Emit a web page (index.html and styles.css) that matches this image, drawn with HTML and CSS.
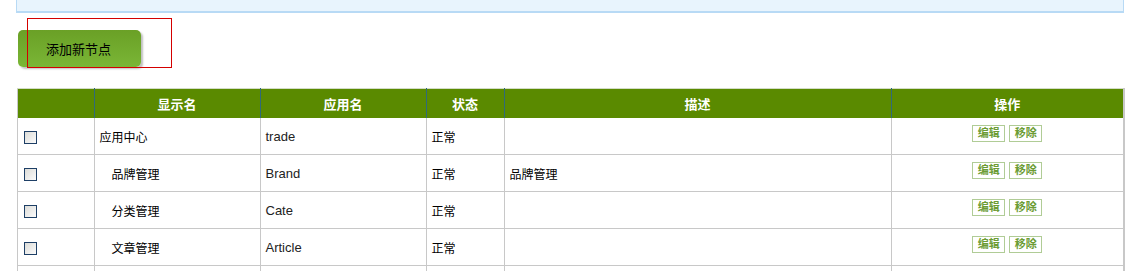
FILE: index.html
```html
<!DOCTYPE html>
<html lang="zh-CN">
<head>
    <meta charset="UTF-8">
    <title>节点管理</title>
    <link rel="stylesheet" href="styles.css">
</head>
<body>
    <div class="tipbox"></div>
    <div class="toolbar">
        <button class="add-btn">添加新节点</button>
        <div class="mark"></div>
    </div>
    <table class="list">
        <thead>
            <tr>
                <th class="c-check"></th>
                <th class="c-name">显示名</th>
                <th class="c-app">应用名</th>
                <th class="c-status">状态</th>
                <th class="c-desc">描述</th>
                <th class="c-op">操作</th>
            </tr>
        </thead>
        <tbody>
            <tr>
                <td><input type="checkbox" class="chk"></td>
                <td>应用中心</td>
                <td class="en">trade</td>
                <td>正常</td>
                <td></td>
                <td class="op"><a class="op-btn">编辑</a><a class="op-btn">移除</a></td>
            </tr>
            <tr>
                <td><input type="checkbox" class="chk"></td>
                <td class="sub">品牌管理</td>
                <td class="en">Brand</td>
                <td>正常</td>
                <td>品牌管理</td>
                <td class="op"><a class="op-btn">编辑</a><a class="op-btn">移除</a></td>
            </tr>
            <tr>
                <td><input type="checkbox" class="chk"></td>
                <td class="sub">分类管理</td>
                <td class="en">Cate</td>
                <td>正常</td>
                <td></td>
                <td class="op"><a class="op-btn">编辑</a><a class="op-btn">移除</a></td>
            </tr>
            <tr>
                <td><input type="checkbox" class="chk"></td>
                <td class="sub">文章管理</td>
                <td class="en">Article</td>
                <td>正常</td>
                <td></td>
                <td class="op"><a class="op-btn">编辑</a><a class="op-btn">移除</a></td>
            </tr>
            <tr>
                <td></td><td></td><td></td><td></td><td></td><td></td>
            </tr>
        </tbody>
    </table>
</body>
</html>
```

FILE: styles.css
```css
body {
    margin: 0;
    padding: 0 10px 0 16px;
    font-family: "Liberation Sans", "Noto Sans CJK SC", sans-serif;
    font-size: 12px;
    color: #000;
    background: #fff;
}
.tipbox {
    height: 11px;
    background: #e8f4fd;
    border: 1px solid #b8daf5;
    border-top: none;
    border-bottom-width: 2px;
    width: 1106px;
}
.toolbar {
    position: relative;
    height: 75px;
}
.add-btn {
    margin: 17px 0 0 2px;
    width: 123px;
    height: 37px;
    border: none;
    border-radius: 5px;
    background: linear-gradient(#6aa026, #7ab636);
    box-shadow: 2px 2px 2px rgba(0, 0, 0, 0.25);
    font-family: "Liberation Sans", "Noto Sans CJK SC", sans-serif;
    font-size: 13px;
    color: #000;
    text-align: left;
    padding-left: 28px;
}
.mark {
    position: absolute;
    left: 11px;
    top: 5px;
    width: 143px;
    height: 48px;
    border: 1px solid #d40000;
}
.list {
    border-collapse: collapse;
    width: 1108px;
    margin-left: 1px;
    table-layout: fixed;
    border-top: 1px solid #d2dcc6;
    border-left: 1px solid #c8c8c8;
    border-right: 2px solid #c8c8c8;
}
.list th {
    background: #5a8a00;
    color: #fff;
    font-size: 13px;
    font-weight: bold;
    height: 29px;
    padding: 0;
    border-left: 1px solid #2f6a7a;
}
.list th:first-child {
    border-left: none;
}
.c-check { width: 75.5px; }
.c-name { width: 165px; }
.c-app { width: 165px; }
.c-status { width: 77px; }
.c-desc { width: 386px; }
.list td {
    height: 36px;
    padding: 0 5px;
    border-left: 1px solid #c8c8c8;
    border-bottom: 1px solid #c8c8c8;
    font-size: 12px;
}
.list td:first-child {
    border-left: none;
}
.list td.sub {
    padding-left: 17px;
}
.list td.en {
    font-size: 13px;
    color: #222;
}
.chk {
    appearance: none;
    -webkit-appearance: none;
    width: 13px;
    height: 13px;
    margin: 3px 0 0 1px;
    vertical-align: middle;
    border: 1px solid #1e3f66;
    background: linear-gradient(135deg, #dcdcd8, #fbfbfb);
}
.op {
    text-align: center;
}
.op-btn {
    display: inline-block;
    width: 31px;
    height: 15px;
    line-height: 15px;
    margin: 0 2px 6px;
    border: 1px solid #b0cc96;
    color: #6c9c34;
    font-size: 11px;
    font-weight: bold;
    text-align: center;
}
```
